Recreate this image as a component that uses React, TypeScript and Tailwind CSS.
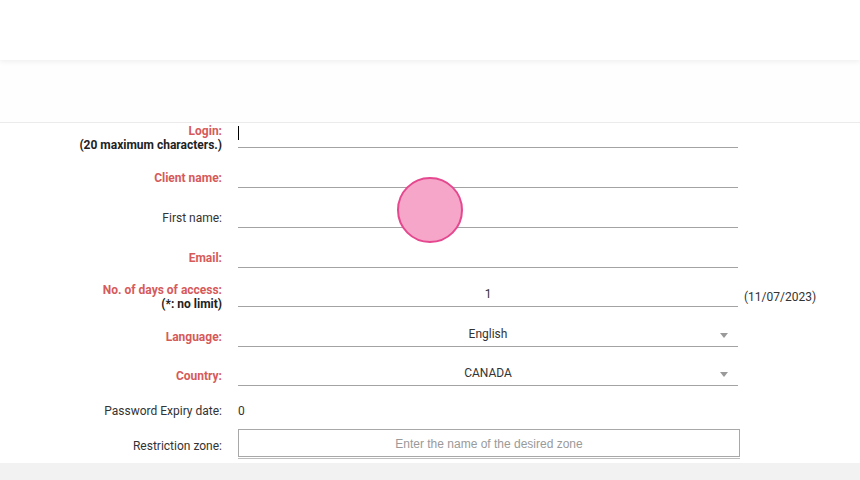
import React from "react";

type Row = {
  label: string;
  sub?: string;
  required?: boolean;
};

const Label: React.FC<Row> = ({ label, sub, required }) => (
  <div className="w-[222px] shrink-0 pt-[3px] text-right text-[12px] leading-[14px]">
    <div className={required ? "font-bold text-[#d65a5a]" : "text-[#333]"}>{label}</div>
    {sub && <div className="font-bold text-[#222]">{sub}</div>}
  </div>
);

const Caret = () => (
  <svg width="8" height="5" viewBox="0 0 8 5" className="absolute right-[10px] top-[10px]">
    <path d="M0 0 H8 L4 5 Z" fill="#9a9a9a" />
  </svg>
);

const Line: React.FC<{ children?: React.ReactNode }> = ({ children }) => (
  <div className="relative flex h-[24px] w-[500px] items-center justify-center border-b border-[#a3a3a3] text-[12px] text-[#333]">
    {children}
  </div>
);

export default function App() {
  return (
    <div className="relative h-[480px] w-[860px] overflow-hidden bg-white font-['Roboto',sans-serif]">
      <header className="relative z-10 h-[60px] bg-white shadow-[0_2px_5px_rgba(0,0,0,0.06)]" />
      <div className="h-[63px] border-b border-[#ebebeb] bg-[#fefefe]" />

      <form className="mt-px flex flex-col">
        <div className="flex h-[24px] items-center gap-4">
          <Label label="Login:" sub="(20 maximum characters.)" required />
          <Line>
            <span className="absolute left-0 top-[2px] h-[14px] w-px bg-black" />
          </Line>
        </div>
        <div className="mt-[16px] flex h-[24px] items-center gap-4">
          <Label label="Client name:" required />
          <Line />
        </div>
        <div className="mt-[16px] flex h-[24px] items-center gap-4">
          <Label label="First name:" />
          <Line />
        </div>
        <div className="mt-[16px] flex h-[24px] items-center gap-4">
          <Label label="Email:" required />
          <Line />
        </div>
        <div className="mt-[15px] flex h-[24px] items-center gap-4">
          <Label label="No. of days of access:" sub="(*: no limit)" required />
          <Line>
            <span className="-mt-[2px]">1</span>
          </Line>
          <span className="-ml-[10px] pt-[3px] text-[12px] text-[#333]">(11/07/2023)</span>
        </div>
        <div className="mt-[16px] flex h-[24px] items-center gap-4">
          <Label label="Language:" required />
          <Line>
            <span className="-mt-[2px]">English</span>
            <Caret />
          </Line>
        </div>
        <div className="mt-[15px] flex h-[24px] items-center gap-4">
          <Label label="Country:" required />
          <Line>
            <span className="-mt-[2px]">CANADA</span>
            <Caret />
          </Line>
        </div>
        <div className="mt-[11px] flex h-[24px] items-center gap-4">
          <Label label="Password Expiry date:" />
          <span className="pt-[3px] text-[12px] text-[#333]">0</span>
        </div>
        <div className="mt-[8px] flex items-center gap-4">
          <Label label="Restriction zone:" />
          <div className="w-[502px] border-b border-[#bdbdbd] pb-px">
            <div className="flex h-[28px] items-center justify-center border border-[#a8a8a8] pt-[2px] font-['Liberation_Sans',sans-serif] text-[12px] text-[#9a9a9a]">
              Enter the name of the desired zone
            </div>
          </div>
        </div>
      </form>

      <div className="absolute bottom-0 left-0 h-[17px] w-full bg-[#f2f2f2]" />

      <div className="absolute left-[397px] top-[177px] h-[66px] w-[66px] rounded-full border-2 border-[#e5488f] bg-[#f5a6c9]" />
    </div>
  );
}
